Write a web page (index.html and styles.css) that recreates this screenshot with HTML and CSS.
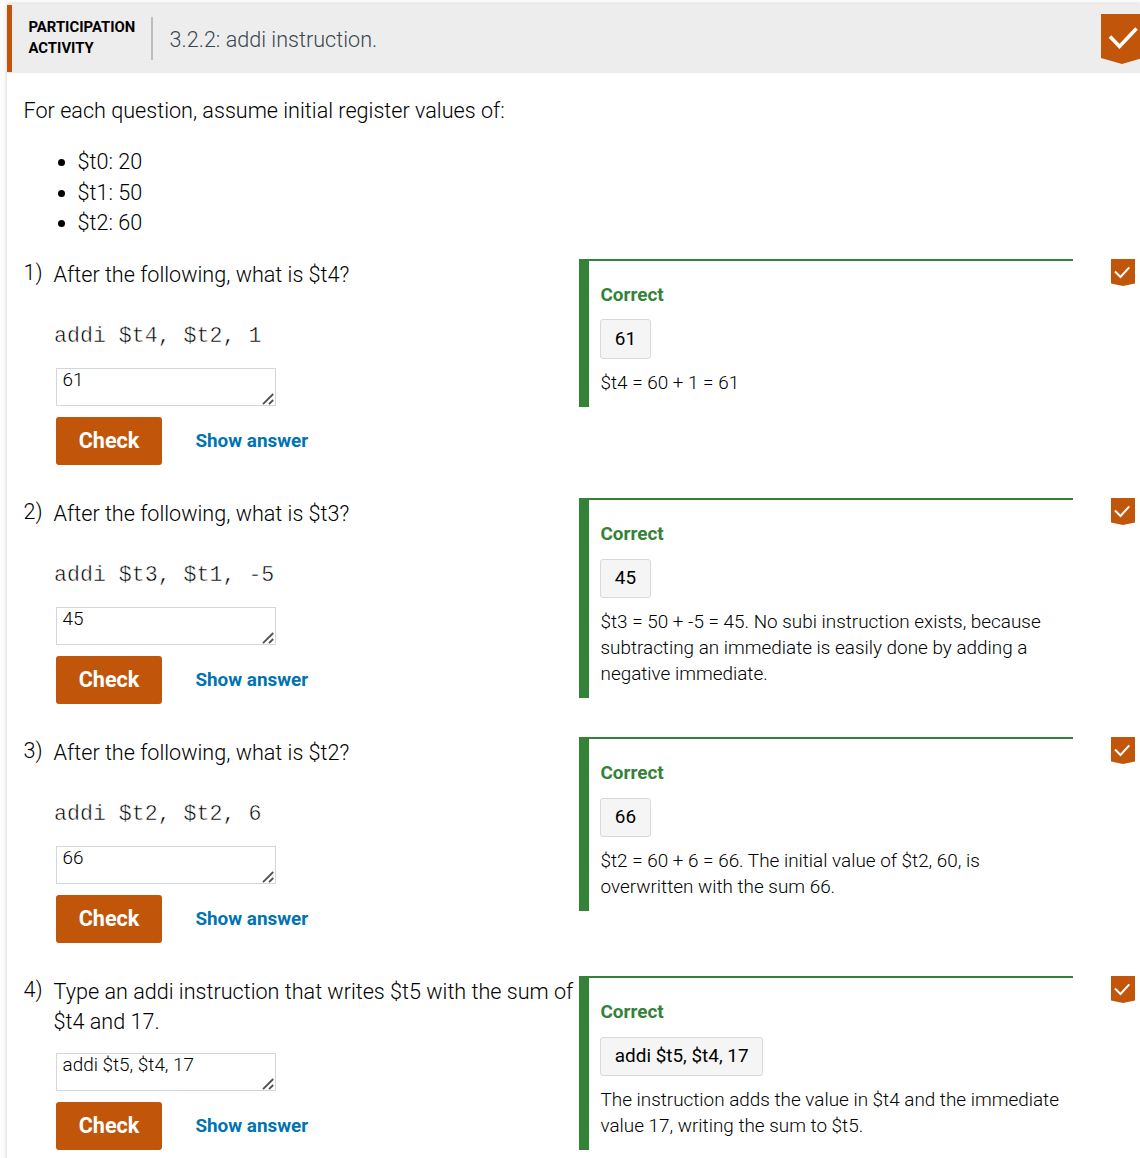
FILE: index.html
```html
<!DOCTYPE html>
<html lang="en">
<head>
<meta charset="utf-8">
<title>3.2.2: addi instruction.</title>
<link rel="stylesheet" href="styles.css">
</head>
<body>
<svg class="defs" width="0" height="0">
  <symbol id="chevron" viewBox="0 0 24 27">
    <path d="M0 0H24V24.5L12 27L0 24.5Z" fill="#c1560b"/>
    <path d="M4 12.5L9.5 18L18.3 8.3" fill="none" stroke="#fff" stroke-width="2"/>
  </symbol>
  <symbol id="grip" viewBox="0 0 12 12">
    <path d="M1 11.2L11.2 1M7 11.2L11.2 7" fill="none" stroke="#505050" stroke-width="1.8"/>
  </symbol>
</svg>
<main class="activity">
  <header class="header">
    <div class="kind">PARTICIPATION<br>ACTIVITY</div>
    <h1 class="title">3.2.2: addi instruction.</h1>
    <svg class="header-chevron" viewBox="0 0 42 50">
      <path d="M0 0H42V44L21 50L0 44Z" fill="#c1560b"/>
      <path d="M9 22.5L18.5 32.5L35.5 14.5" fill="none" stroke="#fff" stroke-width="3.6"/>
    </svg>
  </header>
  <div class="intro">
    <p class="lead">For each question, assume initial register values of:</p>
    <ul class="registers">
      <li>$t0: 20</li>
      <li>$t1: 50</li>
      <li>$t2: 60</li>
    </ul>
  </div>

  <section class="question">
    <div class="number">1)</div>
    <div class="prompt">
      <p class="text">After the following, what is $t4?</p>
      <pre class="code">addi $t4, $t2, 1</pre>
      <div class="answer"><span>61</span><svg class="grip"><use href="#grip"/></svg></div>
      <div class="actions"><button class="check">Check</button><button class="show">Show answer</button></div>
    </div>
    <div class="explanation">
      <h2 class="verdict">Correct</h2>
      <div class="given given-first">61</div>
      <p class="reason">$t4 = 60 + 1 = 61</p>
    </div>
    <svg class="chevron"><use href="#chevron"/></svg>
  </section>

  <section class="question">
    <div class="number">2)</div>
    <div class="prompt">
      <p class="text">After the following, what is $t3?</p>
      <pre class="code">addi $t3, $t1, -5</pre>
      <div class="answer"><span>45</span><svg class="grip"><use href="#grip"/></svg></div>
      <div class="actions"><button class="check">Check</button><button class="show">Show answer</button></div>
    </div>
    <div class="explanation">
      <h2 class="verdict">Correct</h2>
      <div class="given">45</div>
      <p class="reason">$t3 = 50 + -5 = 45. No subi instruction exists, because subtracting an immediate is easily done by adding a negative immediate.</p>
    </div>
    <svg class="chevron"><use href="#chevron"/></svg>
  </section>

  <section class="question">
    <div class="number">3)</div>
    <div class="prompt">
      <p class="text">After the following, what is $t2?</p>
      <pre class="code">addi $t2, $t2, 6</pre>
      <div class="answer"><span>66</span><svg class="grip"><use href="#grip"/></svg></div>
      <div class="actions"><button class="check">Check</button><button class="show">Show answer</button></div>
    </div>
    <div class="explanation">
      <h2 class="verdict">Correct</h2>
      <div class="given">66</div>
      <p class="reason">$t2 = 60 + 6 = 66. The initial value of $t2, 60, is overwritten with the sum 66.</p>
    </div>
    <svg class="chevron"><use href="#chevron"/></svg>
  </section>

  <section class="question">
    <div class="number">4)</div>
    <div class="prompt">
      <p class="text">Type an addi instruction that writes $t5 with the sum of $t4 and 17.</p>
      <div class="answer"><span>addi $t5, $t4, 17</span><svg class="grip"><use href="#grip"/></svg></div>
      <div class="actions"><button class="check">Check</button><button class="show">Show answer</button></div>
    </div>
    <div class="explanation">
      <h2 class="verdict">Correct</h2>
      <div class="given">addi $t5, $t4, 17</div>
      <p class="reason">The instruction adds the value in $t4 and the immediate value 17, writing the sum to $t5.</p>
    </div>
    <svg class="chevron"><use href="#chevron"/></svg>
  </section>
</main>
</body>
</html>
```
FILE: styles.css
```css
* { box-sizing: border-box; }

body {
  margin: 0;
  height: 1158px;
  overflow: hidden;
  background: #fcfcfc;
  color: #000;
  font: 300 21.6px/30.3px Roboto, sans-serif;
}

h1, h2, p, ul, pre { margin: 0; }

.defs { display: none; }

.activity {
  margin: 4px 0 0 7px;
  height: 1170px;
  background: #fff;
  box-shadow: 0 0 4px rgba(0, 0, 0, 0.2);
}

.header {
  display: flex;
  height: 69px;
  background: #ededed;
  overflow: hidden;
}

.header::before {
  content: "";
  width: 5px;
  height: 67px;
  margin-top: 1px;
  background: #c1560b;
}

.kind {
  width: 141px;
  height: 43px;
  margin-top: 13px;
  padding-left: 16.5px;
  border-right: 2px solid #bdbdbd;
  font-size: 14.85px;
  font-weight: 700;
  line-height: 21px;
}

.title {
  flex: 1;
  padding: 21px 0 0 16.6px;
  color: #37474f;
  font-size: 21.6px;
  font-weight: 300;
}

.header-chevron {
  flex: none;
  width: 42px;
  height: 50px;
  margin: 10px -3px 0 0;
}

.intro {
  height: 186px;
  padding: 23px 0 0 16.6px;
}

.registers {
  margin-top: 21px;
  padding-left: 54px;
}

.question {
  display: grid;
  grid-template-columns: 30px 525px 494px 55px;
  align-items: start;
  height: 239px;
  padding-left: 17px;
}

.number {
  margin: -1px 0 0 -0.5px;
}

.prompt { padding-top: 1px; }

.text {
  width: 525px;
  margin-left: -0.4px;
}

.code {
  margin-top: 31px;
  font: 21.6px/30px "Liberation Mono", monospace;
  -webkit-text-stroke: 0.5px #fff;
}

.answer {
  display: flex;
  justify-content: space-between;
  width: 220px;
  height: 38px;
  margin: 17px 0 0 2px;
  padding: 0 1px 0 5.6px;
  border: 1px solid #cfd8dc;
  font-size: 18.9px;
  line-height: 22px;
}

.text + .answer { margin-top: 15.3px; }

.grip {
  align-self: flex-end;
  width: 12px;
  height: 12px;
}

.actions {
  display: flex;
  align-items: center;
  margin: 11px 0 0 2px;
}

.check, .show {
  padding: 0;
  border: 0;
  font: 700 21.6px/46px Roboto, sans-serif;
}

.check {
  width: 106px;
  height: 48px;
  background: #c1560b;
  border-radius: 3px;
  color: #fff;
}

.show {
  margin-left: 33.4px;
  background: none;
  color: #0073b1;
  font-size: 18.9px;
}

.explanation {
  border-top: 2px solid #338237;
  border-left: 10px solid #338237;
  padding: 21px 0 11.2px 11px;
  font-size: 18.9px;
  line-height: 26.1px;
}

.verdict {
  padding-left: 0.5px;
  color: #338237;
  font-size: 18.9px;
  font-weight: 700;
  line-height: 26px;
}

.given {
  width: fit-content;
  height: 39px;
  margin: 12px 0 11px;
  padding: 0 13.8px;
  background: #f5f5f5;
  border: 1px solid #d9d9d9;
  border-radius: 3px;
  font-weight: 400;
  line-height: 35px;
}

.given-first {
  height: 40px;
  margin-top: 11px;
  line-height: 37px;
}

.reason {
  width: 470px;
  padding-left: 0.5px;
}

.chevron {
  width: 24px;
  height: 27px;
  margin-left: 38px;
}
```
